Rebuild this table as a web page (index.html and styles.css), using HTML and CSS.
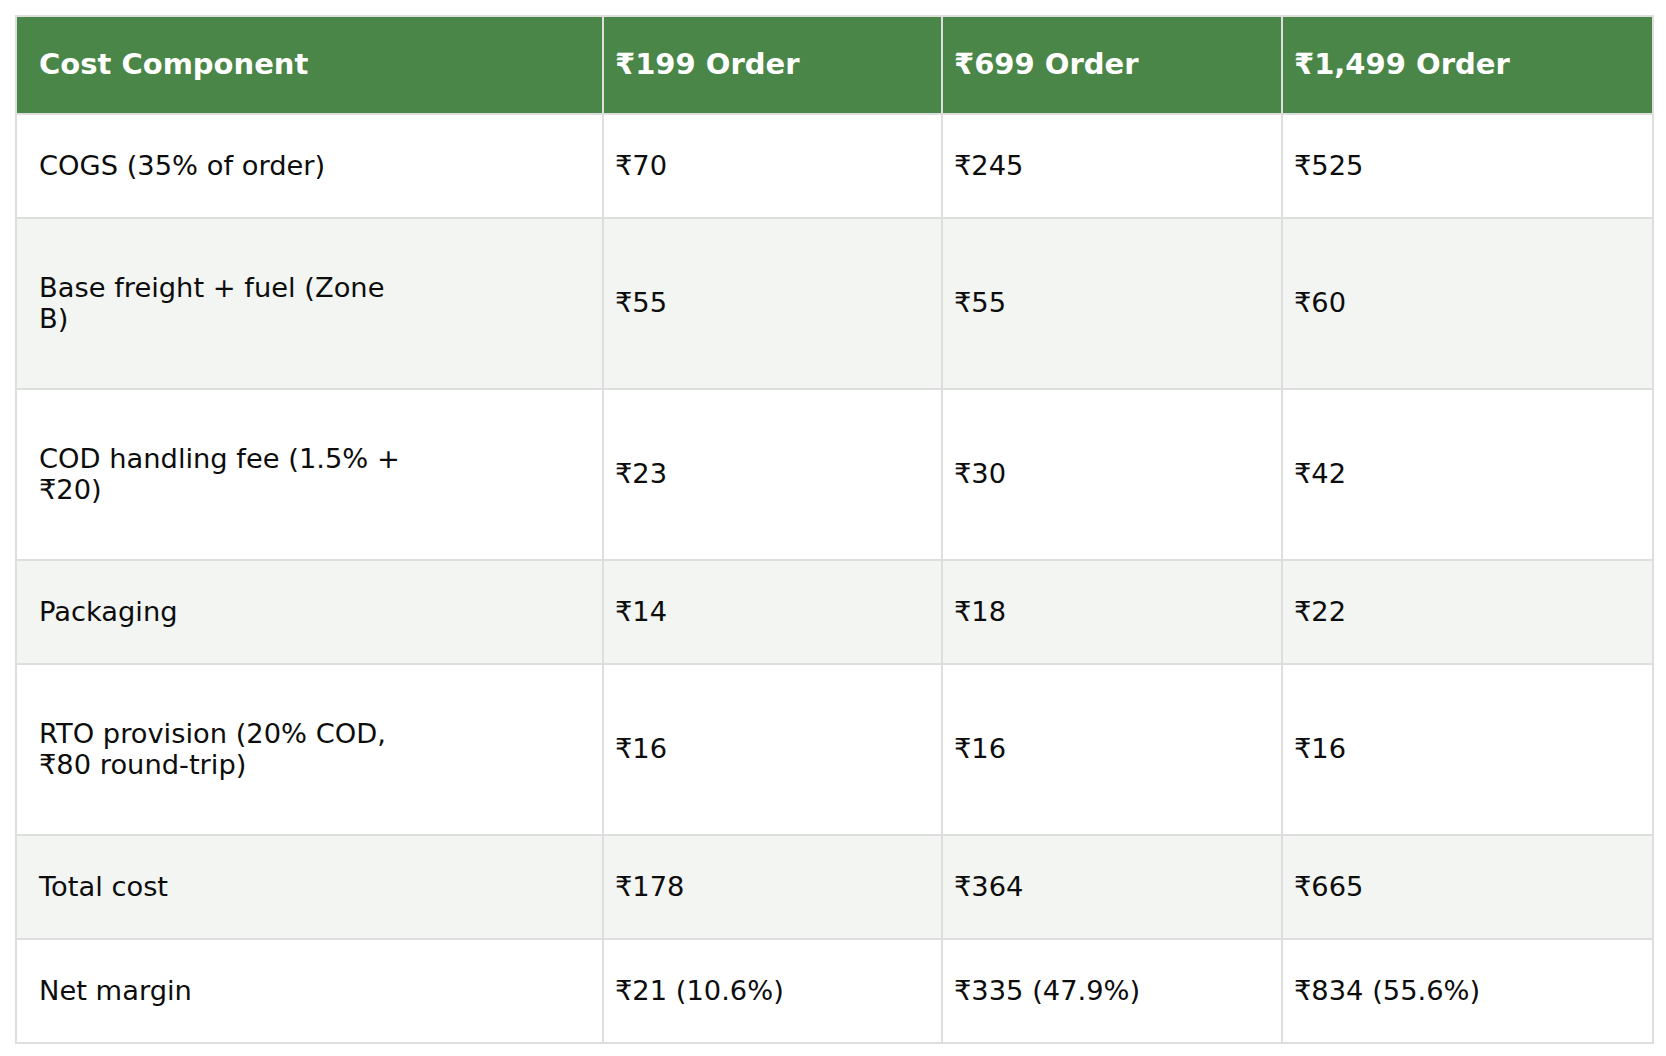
FILE: index.html
```html
<!DOCTYPE html>
<html lang="en">
<head>
<meta charset="utf-8">
<title>Cost Components</title>
<link rel="stylesheet" href="styles.css">
</head>
<body>
<div class="page">
  <table class="cost-table">
    <colgroup>
      <col class="col-label">
      <col class="col-a">
      <col class="col-b">
      <col class="col-c">
    </colgroup>
    <thead>
      <tr class="head-row">
        <th class="label">Cost Component</th>
        <th>₹199 Order</th>
        <th>₹699 Order</th>
        <th>₹1,499 Order</th>
      </tr>
    </thead>
    <tbody>
      <tr class="short">
        <td class="label"><span class="wrap">COGS (35% of order)</span></td>
        <td>₹70</td><td>₹245</td><td>₹525</td>
      </tr>
      <tr class="tall alt">
        <td class="label"><span class="wrap">Base freight + fuel (Zone B)</span></td>
        <td>₹55</td><td>₹55</td><td>₹60</td>
      </tr>
      <tr class="tall">
        <td class="label"><span class="wrap">COD handling fee (1.5% + ₹20)</span></td>
        <td>₹23</td><td>₹30</td><td>₹42</td>
      </tr>
      <tr class="short alt">
        <td class="label"><span class="wrap">Packaging</span></td>
        <td>₹14</td><td>₹18</td><td>₹22</td>
      </tr>
      <tr class="tall">
        <td class="label"><span class="wrap">RTO provision (20% COD, ₹80 round-trip)</span></td>
        <td>₹16</td><td>₹16</td><td>₹16</td>
      </tr>
      <tr class="short alt">
        <td class="label"><span class="wrap">Total cost</span></td>
        <td>₹178</td><td>₹364</td><td>₹665</td>
      </tr>
      <tr class="short">
        <td class="label"><span class="wrap">Net margin</span></td>
        <td>₹21 (10.6%)</td><td>₹335 (47.9%)</td><td>₹834 (55.6%)</td>
      </tr>
    </tbody>
  </table>
</div>
</body>
</html>
```

FILE: styles.css
```css
html, body {
  margin: 0;
  padding: 0;
  background: #ffffff;
}

body {
  font-family: "DejaVu Sans", "Noto Sans", sans-serif;
  font-size: 27.3px;
  color: #0d0d0d;
}

.page {
  padding: 15px 14px 15px 15px;
}

.cost-table {
  width: 1637px;
  border-collapse: collapse;
  table-layout: fixed;
  border: 2px solid #dedede;
}

.col-label { width: 587px; }
.col-a { width: 339px; }
.col-b { width: 340px; }
.col-c { width: 371px; }

.cost-table th,
.cost-table td {
  border: 2px solid #dedede;
  padding: 0 11px;
  text-align: left;
  vertical-align: middle;
  line-height: 1.1;
}

.cost-table th {
  background: #4a8647;
  color: #ffffff;
  font-weight: bold;
  font-size: 29px;
}

.cost-table .label {
  padding-left: 22px;
}

.wrap {
  display: block;
  max-width: 372px;
}

.head-row { height: 98px; }
.short { height: 104px; }
.tall { height: 171px; }

.alt td { background: #f3f5f3; }
```
